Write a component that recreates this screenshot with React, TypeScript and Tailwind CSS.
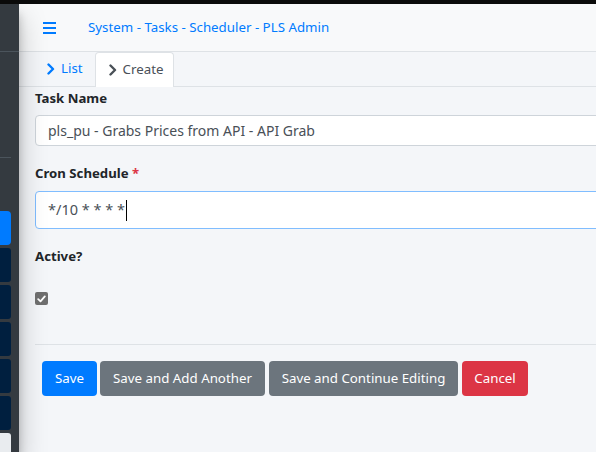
const font = { fontFamily: '"Noto Sans", "Open Sans", Arial, sans-serif' }

function Chevron({ className }: { className?: string }) {
  return (
    <svg width="8" height="12" viewBox="0 0 8 12" className={className}>
      <polyline
        points="1.5,1.5 6,6 1.5,10.5"
        fill="none"
        stroke="currentColor"
        strokeWidth="2.4"
        strokeLinecap="round"
        strokeLinejoin="round"
      />
    </svg>
  )
}

function Sidebar() {
  return (
    <aside className="relative z-10 flex w-[19px] shrink-0 flex-col bg-[#343a40] shadow-[0_14px_28px_rgba(0,0,0,0.25),0_10px_10px_rgba(0,0,0,0.22)]">
      <div className="h-[48px] shrink-0 border-b border-[#4b545c]" />
      <div className="h-[106px] w-[11px] shrink-0 border-b border-[#4b545c]" />
      <div className="mt-[53px] flex shrink-0 flex-col gap-[3px]">
        <div className="h-[34px] w-[11px] shrink-0 rounded-r-[4px] bg-[#007bff]" />
        {[0, 1, 2, 3, 4].map((i) => (
          <div key={i} className="h-[34px] w-[11px] shrink-0 rounded-r-[3px] bg-[#001f3f]" />
        ))}
        <div className="h-[34px] w-[11px] shrink-0 rounded-r-[3px] bg-[#e9ecef]" />
      </div>
    </aside>
  )
}

export default function App() {
  return (
    <div
      className="flex h-[452px] w-[596px] flex-col overflow-hidden bg-[#0b0b0b] text-[13.3px] text-[#212529]"
      style={font}
    >
      <div className="h-[4px] shrink-0 bg-[#0b0b0b]" />
      <div className="flex min-h-0 flex-1">
        <Sidebar />
        <main className="flex min-w-0 flex-1 flex-col bg-[#f4f6f9]">
          <header className="flex h-[48px] shrink-0 items-center border-b border-[#dee2e6] bg-[#f8f9fa] pl-[24px]">
            <div className="flex w-[13px] flex-col gap-[3px]">
              <span className="h-[2px] bg-[#007bff]" />
              <span className="h-[2px] bg-[#007bff]" />
              <span className="h-[2px] bg-[#007bff]" />
            </div>
            <span className="ml-[32px] text-[13.3px] text-[#007bff]">
              System - Tasks - Scheduler - PLS Admin
            </span>
          </header>

          <nav className="flex h-[35px] shrink-0 items-end border-b border-[#dee2e6] pl-[16px]">
            <a className="flex h-[34px] items-center gap-[6px] pl-[12px] pr-[12px] text-[#007bff]">
              <Chevron />
              <span>List</span>
            </a>
            <a className="-mb-px flex h-[35px] items-center gap-[6px] rounded-t-[4px] border border-b-0 border-[#dee2e6] bg-white pl-[13px] pr-[10px] text-[#495057]">
              <Chevron />
              <span>Create</span>
            </a>
          </nav>

          <section className="flex flex-col pl-[16px]">
            <label className="mt-px text-[13.2px] font-bold leading-[21px]">Task Name</label>
            <div className="mt-[6px] flex h-[31px] w-[640px] items-center rounded-[4px] border border-[#ced4da] bg-white pl-[12px] text-[14px] text-[#495057]">
              pls_pu - Grabs Prices from API - API Grab
            </div>

            <label className="mt-[17px] text-[13.2px] font-bold leading-[21px]">
              Cron Schedule <span className="text-[#dc3545]">*</span>
            </label>
            <div className="mt-[7px] flex h-[38px] w-[640px] items-center rounded-[4px] border border-[#80bdff] bg-white pl-[12px] text-[14.5px] text-[#495057]">
              <span>*/10 * * * *</span>
              <span className="ml-[1px] h-[21px] w-px bg-black" />
            </div>

            <label className="mt-[17px] text-[13.2px] font-bold leading-[21px]">Active?</label>
            <div className="mt-[25px] flex h-[13px] w-[13px] items-center justify-center rounded-[2px] bg-[#6f6f6f]">
              <svg width="9" height="8" viewBox="0 0 9 8">
                <polyline
                  points="1.2,4.2 3.5,6.4 7.8,1.4"
                  fill="none"
                  stroke="white"
                  strokeWidth="1.8"
                  strokeLinecap="round"
                  strokeLinejoin="round"
                />
              </svg>
            </div>

            <hr className="mt-[39px] w-[600px] border-t border-[#dee2e6]" />

            <div className="mt-[16px] flex gap-[3px] pl-[7px] text-[13.3px] text-white">
              <button className="h-[35px] w-[55px] rounded-[4px] bg-[#007bff]">Save</button>
              <button className="h-[35px] w-[165px] rounded-[4px] bg-[#6c757d]">
                Save and Add Another
              </button>
              <button className="ml-px h-[35px] w-[189px] rounded-[4px] bg-[#6c757d]">
                Save and Continue Editing
              </button>
              <button className="ml-px h-[35px] w-[66px] rounded-[4px] bg-[#dc3545]">Cancel</button>
            </div>
          </section>
        </main>
      </div>
    </div>
  )
}
